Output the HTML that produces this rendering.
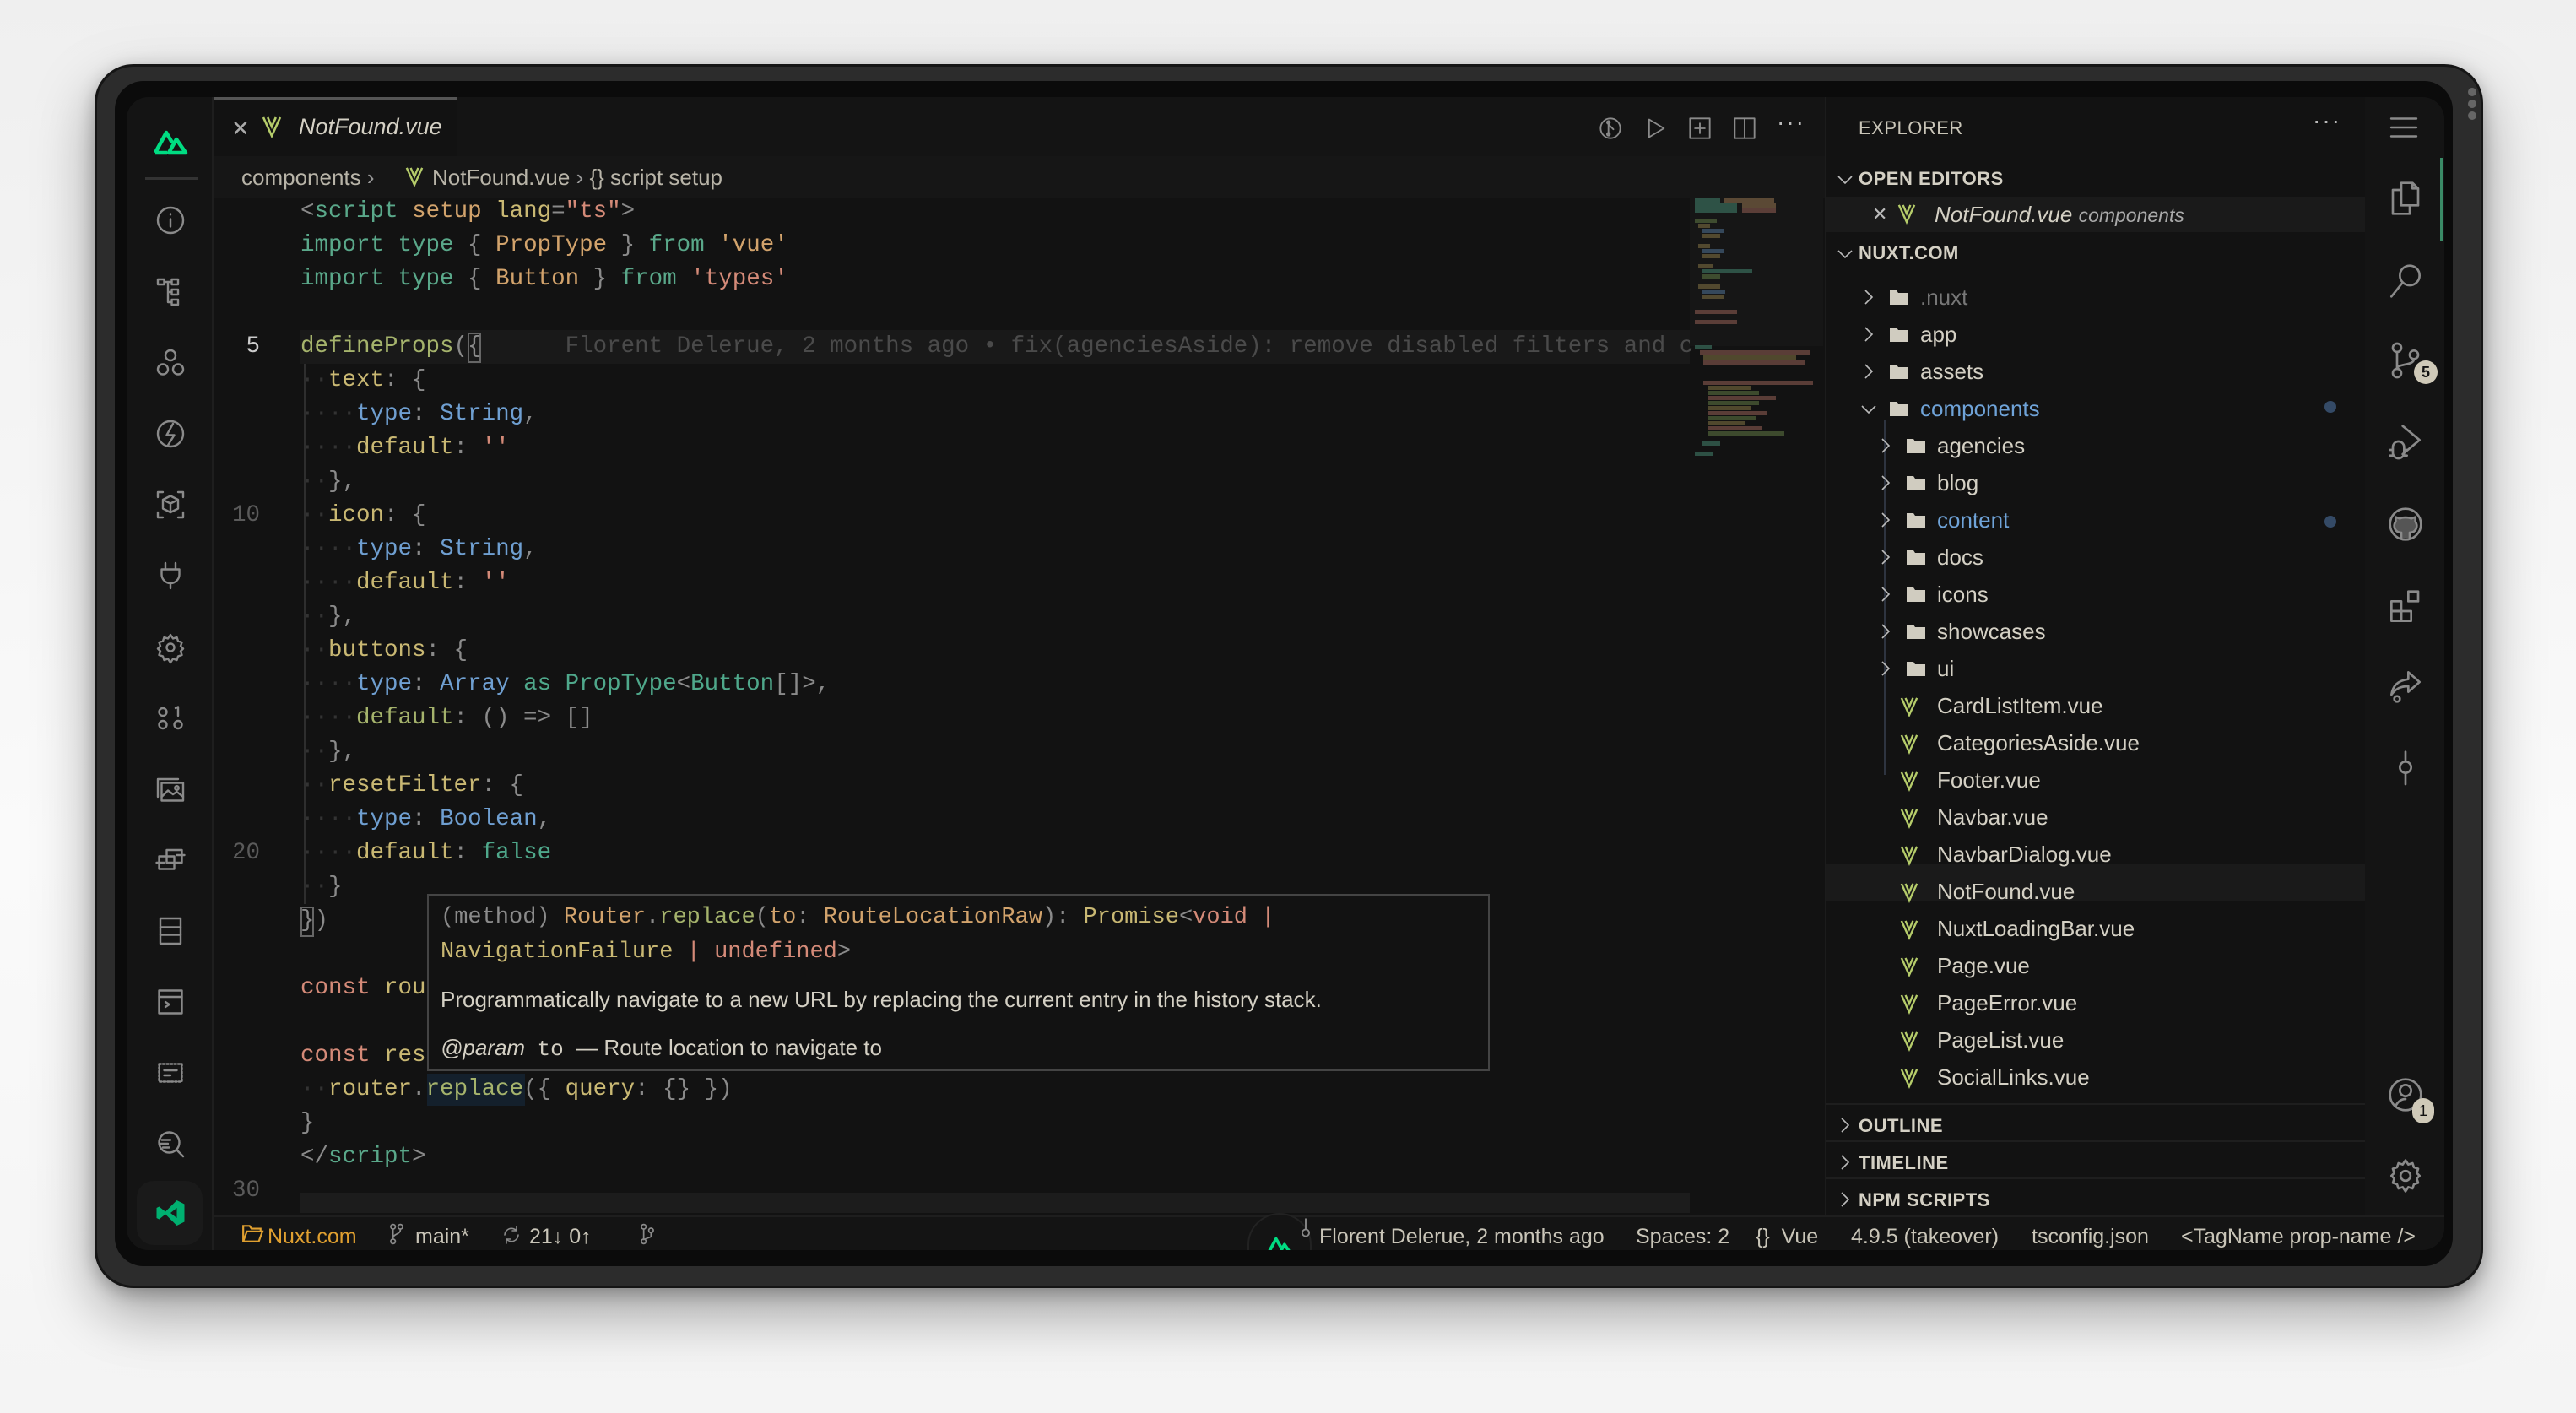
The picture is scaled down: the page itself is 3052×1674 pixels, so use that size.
<!DOCTYPE html>
<html><head><meta charset="utf-8"><style>
*{margin:0;padding:0;box-sizing:border-box}
html,body{width:3052px;height:1674px;overflow:hidden;background:linear-gradient(#efefef,#fafafa 60%,#f4f4f4);font-family:"Liberation Sans",sans-serif}
.abs{position:absolute}
#frame{left:112px;top:76px;width:2830px;height:1450px;border-radius:46px;background:#2c2c2c;border:3px solid #151515;box-shadow:0 30px 70px rgba(0,0,0,.35),0 6px 20px rgba(0,0,0,.25)}
#bezel{left:136px;top:96px;width:2770px;height:1404px;border-radius:34px;background:#0b0b0b}
#screen{left:150px;top:115px;width:2746px;height:1366px;border-radius:26px;background:#121212;overflow:hidden}
.mono{font-family:"Liberation Mono",monospace;font-size:27.5px;line-height:40px}
.mono>div{white-space:pre}
.cl{position:absolute;left:206px}
.k{color:#5aa88a}.y{color:#d2a36c}.s{color:#d48a78}.p{color:#8a8a8a}.f{color:#c9b873}.b{color:#6f9fd1}.o{color:#a5b36c}.d{color:#333}.c{color:#d48a78}.g{color:#4fa88b}
.ln{position:absolute;left:110px;width:48px;text-align:right;color:#5a5a5a}
.ex{position:absolute;font-size:26px;color:#d4d0c4;white-space:nowrap;line-height:44px}
.hd{position:absolute;font-size:22px;font-weight:bold;color:#d4d0c4;letter-spacing:.5px}
.st{position:absolute;top:1330px;font-size:25px;color:#c9c5b8;white-space:nowrap;line-height:40px}
svg{position:absolute;overflow:visible}
.ic{fill:none;stroke:#8a8a8a;stroke-width:1.6;stroke-linecap:round;stroke-linejoin:round}
.chev{fill:none;stroke:#bbb;stroke-width:1.6}
</style></head><body>
<div id="frame" class="abs"></div>
<div id="bezel" class="abs"></div>
<div class="abs" style="left:2924px;top:104px;width:10px;height:10px;border-radius:5px;background:#666"></div>
<div class="abs" style="left:2924px;top:118px;width:10px;height:10px;border-radius:5px;background:#666"></div>
<div class="abs" style="left:2924px;top:132px;width:10px;height:10px;border-radius:5px;background:#666"></div>
<div id="screen" class="abs">
 <!-- tab bar -->
 <div class="abs" style="left:103px;top:0;width:2059px;height:70px;background:#141414"></div>
 <div class="abs" style="left:103px;top:0;width:288px;height:70px;background:#121212;border-top:3px solid #555"></div>
 <div class="abs" style="left:124px;top:22px;font-size:26px;color:#aaa">✕</div>
 <svg style="left:160px;top:22px" width="24" height="26" viewBox="0 0 12 13"><path d="M1 1L6 12 11 1M3.6 1L6 6.5 8.4 1" fill="none" stroke="#b5cc6a" stroke-width="1.3"/></svg>
 <div class="abs" style="left:204px;top:20px;font-size:27px;font-style:italic;color:#d4d0c4">NotFound.vue</div>
 <svg style="left:1744px;top:23px" width="28" height="28" viewBox="0 0 24 24" class="ic" stroke="#bbb"><circle cx="12" cy="12" r="10"/><path d="M10 6v12M10 8l5 5"/><circle cx="10" cy="6" r="1.5"/><circle cx="10" cy="18" r="1.5"/></svg>
 <svg style="left:1798px;top:23px" width="28" height="28" viewBox="0 0 24 24" class="ic" stroke="#bbb"><path d="M5 3l15 9-15 9z"/></svg>
 <svg style="left:1850px;top:23px" width="28" height="28" viewBox="0 0 24 24" class="ic" stroke="#bbb"><rect x="2" y="2" width="20" height="20"/><path d="M12 7v10M7 12h10"/></svg>
 <svg style="left:1903px;top:23px" width="28" height="28" viewBox="0 0 24 24" class="ic" stroke="#bbb"><rect x="2" y="2" width="20" height="20"/><path d="M12 2v20"/></svg>
 <div class="abs" style="left:1955px;top:14px;font-size:28px;color:#bbb;letter-spacing:2px">···</div>

 <!-- breadcrumb -->
 <div class="abs" style="left:103px;top:70px;width:2059px;height:50px;background:#161616"></div>
 <div class="abs" style="left:136px;top:80px;font-size:26px;color:#b8b4a8;white-space:nowrap">components <span style="color:#999">›</span></div>
 <svg style="left:330px;top:82px" width="22" height="24" viewBox="0 0 12 13"><path d="M1 1L6 12 11 1M3.6 1L6 6.5 8.4 1" fill="none" stroke="#b5cc6a" stroke-width="1.3"/></svg>
 <div class="abs" style="left:362px;top:80px;font-size:26px;color:#b8b4a8;white-space:nowrap">NotFound.vue <span style="color:#999">›</span> {} script setup</div>

 <!-- current line -->
 <div class="abs" style="left:206px;top:276px;width:1646px;height:40px;background:#191919"></div>
 <div class="abs" style="left:210px;top:316px;width:2px;height:640px;background:#2e2e2e"></div>
 <div class="abs" style="left:404px;top:279px;width:16px;height:36px;border:2px solid #666"></div>
 <div class="abs" style="left:206px;top:959px;width:16px;height:36px;border:2px solid #666"></div>
 <div class="abs" style="left:356px;top:1157px;width:116px;height:38px;background:#14202c"></div>

 <div class="mono">
 <div class="ln" style="top:276px;color:#ccc">5</div>
 <div class="ln" style="top:476px">10</div>
 <div class="ln" style="top:876px">20</div>
 <div class="ln" style="top:1276px">30</div>
 <div class="cl" style="top:116px"><span class="p">&lt;</span><span class="k">script</span> <span class="y">setup</span> <span class="f">lang</span><span class="p">=</span><span class="s">"ts"</span><span class="p">&gt;</span></div>
 <div class="cl" style="top:156px"><span class="k">import type</span> <span class="p">{</span> <span class="y">PropType</span> <span class="p">}</span> <span class="k">from</span> <span class="y">'vue'</span></div>
 <div class="cl" style="top:196px"><span class="k">import type</span> <span class="p">{</span> <span class="y">Button</span> <span class="p">}</span> <span class="k">from</span> <span class="s">'types'</span></div>
 <div class="cl" style="top:276px"><span class="o">defineProps</span><span class="p">({</span>      <span style="color:#4a4a4a">Florent Delerue, 2 months ago • fix(agenciesAside): remove disabled filters and c</span></div>
 <div class="cl" style="top:316px"><span class="d">··</span><span class="f">text</span><span class="p">: {</span></div>
 <div class="cl" style="top:356px"><span class="d">····</span><span class="b">type</span><span class="p">:</span> <span class="b">String</span><span class="p">,</span></div>
 <div class="cl" style="top:396px"><span class="d">····</span><span class="f">default</span><span class="p">:</span> <span class="s">''</span></div>
 <div class="cl" style="top:436px"><span class="d">··</span><span class="p">},</span></div>
 <div class="cl" style="top:476px"><span class="d">··</span><span class="f">icon</span><span class="p">: {</span></div>
 <div class="cl" style="top:516px"><span class="d">····</span><span class="b">type</span><span class="p">:</span> <span class="b">String</span><span class="p">,</span></div>
 <div class="cl" style="top:556px"><span class="d">····</span><span class="f">default</span><span class="p">:</span> <span class="s">''</span></div>
 <div class="cl" style="top:596px"><span class="d">··</span><span class="p">},</span></div>
 <div class="cl" style="top:636px"><span class="d">··</span><span class="f">buttons</span><span class="p">: {</span></div>
 <div class="cl" style="top:676px"><span class="d">····</span><span class="b">type</span><span class="p">:</span> <span class="b">Array</span> <span class="g">as</span> <span class="g">PropType</span><span class="p">&lt;</span><span class="g">Button</span><span class="p">[]&gt;,</span></div>
 <div class="cl" style="top:716px"><span class="d">····</span><span class="o">default</span><span class="p">: () =&gt; []</span></div>
 <div class="cl" style="top:756px"><span class="d">··</span><span class="p">},</span></div>
 <div class="cl" style="top:796px"><span class="d">··</span><span class="f">resetFilter</span><span class="p">: {</span></div>
 <div class="cl" style="top:836px"><span class="d">····</span><span class="b">type</span><span class="p">:</span> <span class="b">Boolean</span><span class="p">,</span></div>
 <div class="cl" style="top:876px"><span class="d">····</span><span class="f">default</span><span class="p">:</span> <span class="g">false</span></div>
 <div class="cl" style="top:916px"><span class="d">··</span><span class="p">}</span></div>
 <div class="cl" style="top:956px"><span class="p">})</span></div>
 <div class="cl" style="top:1036px"><span class="c">const</span> <span class="f">rou</span></div>
 <div class="cl" style="top:1116px"><span class="c">const</span> <span class="f">res</span></div>
 <div class="cl" style="top:1156px"><span class="d">··</span><span class="f">router</span><span class="p">.</span><span class="o">replace</span><span class="p">({</span> <span class="f">query</span><span class="p">: {} })</span></div>
 <div class="cl" style="top:1196px"><span class="p">}</span></div>
 <div class="cl" style="top:1236px"><span class="p">&lt;/</span><span class="k">script</span><span class="p">&gt;</span></div>
 </div>

 <!-- minimap -->
 <div class="abs" style="left:1852px;top:115px;width:158px;height:180px;background:#161616"></div>
 <div class="abs" style="left:1858px;top:120px;width:140px;height:450px;opacity:.6;background:
  linear-gradient(#3f7a66,#3f7a66) 0 0/30px 5px no-repeat,
  linear-gradient(#8a6c4a,#8a6c4a) 34px 0/60px 5px no-repeat,
  linear-gradient(#3f7a66,#3f7a66) 0 6px/50px 5px no-repeat,
  linear-gradient(#8a6c4a,#8a6c4a) 56px 6px/40px 5px no-repeat,
  linear-gradient(#3f7a66,#3f7a66) 0 12px/50px 5px no-repeat,
  linear-gradient(#8a5a50,#8a5a50) 56px 12px/40px 5px no-repeat,
  linear-gradient(#5a7040,#5a7040) 0 24px/26px 5px no-repeat,
  linear-gradient(#7a6c40,#7a6c40) 4px 30px/14px 5px no-repeat,
  linear-gradient(#4a6a8a,#4a6a8a) 8px 36px/26px 5px no-repeat,
  linear-gradient(#7a6c40,#7a6c40) 8px 42px/22px 5px no-repeat,
  linear-gradient(#7a6c40,#7a6c40) 4px 54px/14px 5px no-repeat,
  linear-gradient(#4a6a8a,#4a6a8a) 8px 60px/26px 5px no-repeat,
  linear-gradient(#7a6c40,#7a6c40) 8px 66px/22px 5px no-repeat,
  linear-gradient(#7a6c40,#7a6c40) 4px 78px/18px 5px no-repeat,
  linear-gradient(#3f7a66,#3f7a66) 8px 84px/60px 5px no-repeat,
  linear-gradient(#5a7040,#5a7040) 8px 90px/22px 5px no-repeat,
  linear-gradient(#7a6c40,#7a6c40) 4px 102px/26px 5px no-repeat,
  linear-gradient(#4a6a8a,#4a6a8a) 8px 108px/28px 5px no-repeat,
  linear-gradient(#7a6c40,#7a6c40) 8px 114px/26px 5px no-repeat,
  linear-gradient(#8a5a50,#8a5a50) 0 132px/50px 5px no-repeat,
  linear-gradient(#8a5a50,#8a5a50) 0 144px/50px 5px no-repeat,
  linear-gradient(#3f7a66,#3f7a66) 0 174px/20px 5px no-repeat,
  linear-gradient(#8a5a50,#8a5a50) 6px 180px/130px 5px no-repeat,
  linear-gradient(#7a6c40,#7a6c40) 10px 186px/110px 5px no-repeat,
  linear-gradient(#8a5a50,#8a5a50) 10px 192px/120px 5px no-repeat,
  linear-gradient(#8a5a50,#8a5a50) 10px 216px/140px 5px no-repeat,
  linear-gradient(#7a6c40,#7a6c40) 16px 222px/50px 5px no-repeat,
  linear-gradient(#5a7040,#5a7040) 16px 228px/60px 5px no-repeat,
  linear-gradient(#8a5a50,#8a5a50) 16px 234px/80px 5px no-repeat,
  linear-gradient(#5a7040,#5a7040) 16px 240px/60px 5px no-repeat,
  linear-gradient(#7a6c40,#7a6c40) 16px 246px/50px 5px no-repeat,
  linear-gradient(#8a5a50,#8a5a50) 16px 252px/70px 5px no-repeat,
  linear-gradient(#5a7040,#5a7040) 16px 258px/56px 5px no-repeat,
  linear-gradient(#7a6c40,#7a6c40) 16px 264px/44px 5px no-repeat,
  linear-gradient(#8a5a50,#8a5a50) 16px 270px/64px 5px no-repeat,
  linear-gradient(#5a7040,#5a7040) 16px 276px/90px 5px no-repeat,
  linear-gradient(#3f7a66,#3f7a66) 8px 288px/22px 5px no-repeat,
  linear-gradient(#3f7a66,#3f7a66) 0 300px/22px 5px no-repeat"></div>

 <!-- hscroll -->
 <div class="abs" style="left:206px;top:1298px;width:1646px;height:24px;background:#1c1c1c"></div>

 <!-- tooltip -->
 <div class="abs" style="left:356px;top:944px;width:1259px;height:210px;background:#121212;border:2px solid #444"></div>
 <div class="mono" style="position:absolute;left:372px;top:952px;font-size:27px;line-height:41px">
  <div><span class="p">(method)</span> <span class="y">Router</span><span class="p">.</span><span class="o">replace</span><span class="p">(</span><span class="y">to</span><span class="p">:</span> <span class="y">RouteLocationRaw</span><span class="p">):</span> <span class="f">Promise</span><span class="p">&lt;</span><span class="s">void</span> <span class="s">|</span></div>
  <div><span class="f">NavigationFailure</span> <span class="s">|</span> <span class="s">undefined</span><span class="p">&gt;</span></div>
 </div>
 <div class="abs" style="left:372px;top:1054px;font-size:26px;color:#d4d0c4;white-space:nowrap">Programmatically navigate to a new URL by replacing the current entry in the history stack.</div>
 <div class="abs" style="left:372px;top:1111px;font-size:26px;color:#d4d0c4;white-space:nowrap"><i>@param</i>&nbsp; <span style="font-family:'Liberation Mono',monospace">to</span>&nbsp; — Route location to navigate to</div>

 <!-- sidebar -->
 <div class="abs" style="left:2012px;top:0;width:2px;height:1325px;background:#1c1c1c"></div>
 <div class="abs" style="left:2014px;top:0;width:638px;height:1325px;background:#121212"></div>
 <div class="abs" style="left:2052px;top:24px;font-size:22px;color:#c9c5b8;letter-spacing:.5px">EXPLORER</div>
 <div class="abs" style="left:2590px;top:12px;font-size:28px;color:#bbb;letter-spacing:2px">···</div>
 <div class="abs" style="left:2014px;top:118px;width:638px;height:42px;background:#1a1a1a"></div>
 <div class="abs" style="left:2014px;top:908px;width:638px;height:44px;background:#1a1a1a"></div>
 <div class="abs" style="left:2014px;top:1192px;width:638px;height:2px;background:#1e1e1e"></div>
 <div class="abs" style="left:2014px;top:1236px;width:638px;height:2px;background:#1e1e1e"></div>
 <div class="abs" style="left:2014px;top:1280px;width:638px;height:2px;background:#1e1e1e"></div>
 <div class="abs" style="left:2082px;top:383px;width:2px;height:420px;background:#2e3440"></div>
 <div class="hd" style="left:2052px;top:84px">OPEN EDITORS</div>
 <div class="hd" style="left:2052px;top:172px">NUXT.COM</div>
 <div class="hd" style="left:2052px;top:1206px">OUTLINE</div>
 <div class="hd" style="left:2052px;top:1250px">TIMELINE</div>
 <div class="hd" style="left:2052px;top:1294px">NPM SCRIPTS</div>
 <svg style="left:2026px;top:92px" width="20" height="12" viewBox="0 0 20 12" class="chev"><path d="M2 2l8 8 8-8"/></svg>
 <svg style="left:2026px;top:180px" width="20" height="12" viewBox="0 0 20 12" class="chev"><path d="M2 2l8 8 8-8"/></svg>
 <svg style="left:2030px;top:1208px" width="12" height="20" viewBox="0 0 12 20" class="chev"><path d="M2 2l8 8-8 8"/></svg>
 <svg style="left:2030px;top:1252px" width="12" height="20" viewBox="0 0 12 20" class="chev"><path d="M2 2l8 8-8 8"/></svg>
 <svg style="left:2030px;top:1296px" width="12" height="20" viewBox="0 0 12 20" class="chev"><path d="M2 2l8 8-8 8"/></svg>
 <div class="ex" style="left:2068px;top:117px;font-size:22px;color:#bbb">✕</div>
 <svg style="left:2098px;top:126px" width="22" height="24" viewBox="0 0 12 13"><path d="M1 1L6 12 11 1M3.6 1L6 6.5 8.4 1" fill="none" stroke="#b5cc6a" stroke-width="1.3"/></svg>
 <div class="ex" style="left:2142px;top:117px;font-style:italic">NotFound.vue <span style="font-size:23px;color:#aaa">components</span></div>

 <div id="tree"></div>
 <div class="abs" style="left:2604px;top:360px;width:14px;height:14px;border-radius:7px;background:#344a66"></div>
 <div class="abs" style="left:2604px;top:496px;width:14px;height:14px;border-radius:7px;background:#344a66"></div>

 <!-- right activity bar -->
 <div class="abs" style="left:2652px;top:0;width:94px;height:1325px;background:#141414"></div>
 <div class="abs" style="left:2741px;top:72px;width:4px;height:98px;background:#3a8a66"></div>
 <svg style="left:2680px;top:22px" width="36" height="28" viewBox="0 0 24 18" class="ic" stroke="#999"><path d="M2 2h20M2 9h20M2 16h20"/></svg>
 <svg style="left:2680px;top:98px" width="40" height="44" viewBox="0 0 24 26" class="ic" stroke="#ddd"><path d="M9 2h8l4 4v12H9zM17 2v4h4M9 7H3v17h12v-6"/></svg>
 <svg style="left:2680px;top:196px" width="40" height="44" viewBox="0 0 24 26" class="ic" stroke="#888"><circle cx="15" cy="9" r="7"/><path d="M10 14L2 24"/></svg>
 <svg style="left:2680px;top:290px" width="40" height="44" viewBox="0 0 24 26" class="ic" stroke="#888"><circle cx="6" cy="4" r="3"/><circle cx="6" cy="22" r="3"/><circle cx="18" cy="9" r="3"/><path d="M6 7v12M18 12c0 5-12 3-12 7"/></svg>
 <div class="abs" style="left:2710px;top:312px;width:28px;height:28px;border-radius:14px;background:#cfc9b8;color:#111;font-size:18px;font-weight:bold;text-align:center;line-height:28px">5</div>
 <svg style="left:2680px;top:386px" width="40" height="44" viewBox="0 0 24 26" class="ic" stroke="#888"><path d="M10 2l12 10-12 10M3 17a4 4 0 0 1 8 0v4a4 4 0 0 1-8 0zM1 19h2M11 19h2M1 23h2M11 23h2"/></svg>
 <svg style="left:2680px;top:484px" width="40" height="44" viewBox="0 0 24 26" class="ic" stroke="#888"><circle cx="12" cy="13" r="11"/><path d="M9 23v-4c-3 0-5-2-5-5 0-1 1-3 1-3V8l3 1c2-1 6-1 8 0l3-1v3s1 2 1 3c0 3-2 5-5 5v4" fill="#555"/></svg>
 <svg style="left:2680px;top:582px" width="40" height="44" viewBox="0 0 24 26" class="ic" stroke="#888"><rect x="2" y="9" width="7" height="7"/><rect x="2" y="16" width="7" height="7"/><rect x="9" y="16" width="7" height="7"/><rect x="14" y="2" width="7" height="7"/></svg>
 <svg style="left:2680px;top:676px" width="40" height="44" viewBox="0 0 24 26" class="ic" stroke="#888"><path d="M14 3l8 7-8 7v-4c-6 0-9 2-12 6 1-6 4-10 12-11z"/><circle cx="6" cy="22" r="2"/></svg>
 <svg style="left:2680px;top:772px" width="40" height="44" viewBox="0 0 24 26" class="ic" stroke="#888"><circle cx="12" cy="13" r="4"/><path d="M12 2v7M12 17v8"/></svg>
 <svg style="left:2680px;top:1160px" width="40" height="44" viewBox="0 0 24 26" class="ic" stroke="#777"><circle cx="12" cy="13" r="11"/><circle cx="12" cy="10" r="4"/><path d="M5 21c2-4 5-5 7-5"/></svg>
 <div class="abs" style="left:2708px;top:1186px;width:26px;height:30px;border-radius:13px;background:#cfc9b8;color:#111;font-size:18px;text-align:center;line-height:30px">1</div>
 <svg style="left:2680px;top:1256px" width="40" height="44" viewBox="0 0 24 26" class="ic" stroke="#777"><circle cx="12" cy="13" r="3.5"/><path d="M12 2l2 3 3-1 1 3 3 1-1 3 2 2-2 2 1 3-3 1-1 3-3-1-2 3-2-3-3 1-1-3-3-1 1-3-2-2 2-2-1-3 3-1 1-3 3 1z"/></svg>

 <!-- status bar -->
 <div class="abs" style="left:103px;top:1325px;width:2643px;height:41px;background:#141414;border-top:2px solid #1e1e1e"></div>
 <svg style="left:136px;top:1334px" width="26" height="24" viewBox="0 0 24 22" fill="none" stroke="#e0a030" stroke-width="2"><path d="M2 20V3h7l2 3h10v3M2 20l4-11h17l-4 11z"/></svg>
 <div class="st" style="left:167px;color:#e0a030">Nuxt.com</div>
 <svg style="left:310px;top:1334px" width="20" height="26" viewBox="0 0 16 24" class="ic" stroke="#bbb"><circle cx="4" cy="4" r="2.5"/><circle cx="12" cy="4" r="2.5"/><circle cx="4" cy="20" r="2.5"/><path d="M4 7v10M12 7c0 6-8 4-8 10"/></svg>
 <div class="st" style="left:342px">main*</div>
 <svg style="left:444px;top:1336px" width="24" height="24" viewBox="0 0 24 24" class="ic" stroke="#bbb"><path d="M20 12a8 8 0 0 1-14 5M4 12a8 8 0 0 1 14-5M18 2v5h-5M6 22v-5h5"/></svg>
 <div class="st" style="left:477px">21↓ 0↑</div>
 <svg style="left:606px;top:1334px" width="22" height="26" viewBox="0 0 16 24" class="ic" stroke="#bbb"><circle cx="4" cy="4" r="2.5"/><circle cx="12" cy="8" r="2.5"/><circle cx="4" cy="20" r="2.5"/><path d="M4 7v10M12 11v4l-8 3"/></svg>
 <div class="abs" style="left:1328px;top:1322px;width:76px;height:80px;border-radius:38px;background:#141414;border:2px solid #222"></div>
 <svg style="left:1346px;top:1346px" width="40" height="30" viewBox="0 0 40 36"><path d="M2 32 L15 8 L22 20 M18 32 L27 16 L38 32 Z M2 32 H16" fill="none" stroke="#00dc82" stroke-width="4.5" stroke-linejoin="round"/></svg>
 <svg style="left:1390px;top:1328px" width="14" height="28" viewBox="0 0 10 24" class="ic" stroke="#bbb"><circle cx="5" cy="15" r="3.5"/><path d="M5 1v10"/></svg>
 <div class="st" style="left:1413px">Florent Delerue, 2 months ago</div>
 <div class="st" style="left:1788px">Spaces: 2</div>
 <div class="st" style="left:1930px">{}&nbsp; Vue</div>
 <div class="st" style="left:2043px">4.9.5 (takeover)</div>
 <div class="st" style="left:2257px">tsconfig.json</div>
 <div class="st" style="left:2434px">&lt;TagName prop-name /&gt;</div>

 <!-- left activity bar -->
 <div class="abs" style="left:0;top:0;width:103px;height:1366px;background:#141414;border-right:2px solid #1e1e1e"></div>
 <svg style="left:32px;top:34px" width="40" height="36" viewBox="0 0 40 36"><path d="M2 32 L15 8 L22 20 M18 32 L27 16 L38 32 Z M2 32 H16" fill="none" stroke="#00dc82" stroke-width="4.5" stroke-linejoin="round"/></svg>
 <div class="abs" style="left:22px;top:95px;width:62px;height:3px;background:#333"></div>
 <svg style="left:34px;top:128px" width="36" height="36" viewBox="0 0 24 24" class="ic"><circle cx="12" cy="12" r="10"/><path d="M12 11v6M12 7v.5"/></svg>
 <svg style="left:34px;top:213px" width="36" height="36" viewBox="0 0 24 24" class="ic"><rect x="2" y="2" width="5" height="4"/><rect x="13" y="2" width="5" height="4"/><rect x="13" y="10" width="5" height="4"/><rect x="13" y="18" width="5" height="4"/><path d="M7 4h6M10 4v16h3M10 12h3"/></svg>
 <svg style="left:34px;top:297px" width="36" height="36" viewBox="0 0 24 24" class="ic"><circle cx="12" cy="6" r="4"/><circle cx="6" cy="17" r="4"/><circle cx="18" cy="17" r="4"/></svg>
 <svg style="left:34px;top:381px" width="36" height="36" viewBox="0 0 24 24" class="ic"><circle cx="12" cy="12" r="10"/><path d="M14 4l-5 9h6l-5 8"/></svg>
 <svg style="left:34px;top:465px" width="36" height="36" viewBox="0 0 24 24" class="ic"><path d="M2 6V2h4M18 2h4v4M22 18v4h-4M6 22H2v-4M12 5l6 3v7l-6 3-6-3V8zM6 8l6 3 6-3M12 11v7"/></svg>
 <svg style="left:34px;top:549px" width="36" height="36" viewBox="0 0 24 24" class="ic"><path d="M8 2v5M16 2v5M5 7h14v4a7 7 0 0 1-14 0zM12 18v4"/></svg>
 <svg style="left:34px;top:634px" width="36" height="36" viewBox="0 0 24 24" class="ic"><circle cx="12" cy="12" r="3"/><path d="M12 2l2 3 3-1 1 3 3 1-1 3 2 2-2 2 1 3-3 1-1 3-3-1-2 3-2-3-3 1-1-3-3-1 1-3-2-2 2-2-1-3 3-1 1-3 3 1z"/></svg>
 <svg style="left:34px;top:718px" width="36" height="36" viewBox="0 0 24 24" class="ic"><circle cx="6" cy="7" r="3"/><circle cx="6" cy="17" r="3"/><circle cx="18" cy="17" r="3"/><path d="M16 4l2-1v7"/></svg>
 <svg style="left:34px;top:802px" width="36" height="36" viewBox="0 0 24 24" class="ic"><path d="M2 18V4h16"/><rect x="5" y="7" width="17" height="14"/><path d="M5 18l5-5 4 3 3-2 5 4"/><circle cx="17" cy="11" r="1.5"/></svg>
 <svg style="left:34px;top:886px" width="36" height="36" viewBox="0 0 24 24" class="ic"><rect x="3" y="9" width="12" height="10"/><rect x="9" y="4" width="12" height="10"/><path d="M1 14h6M17 8h6"/></svg>
 <svg style="left:34px;top:970px" width="36" height="36" viewBox="0 0 24 24" class="ic"><rect x="4" y="2" width="16" height="20"/><path d="M4 9h16M4 15h16"/></svg>
 <svg style="left:34px;top:1054px" width="36" height="36" viewBox="0 0 24 24" class="ic"><rect x="3" y="3" width="18" height="18"/><path d="M3 8h18M8 12l3 2-3 2"/></svg>
 <svg style="left:34px;top:1138px" width="36" height="36" viewBox="0 0 24 24" class="ic" stroke-dasharray="1.5 1.5"><rect x="3" y="5" width="18" height="14"/><path d="M7 10h10M7 14h5" stroke-dasharray="none"/></svg>
 <svg style="left:34px;top:1222px" width="36" height="36" viewBox="0 0 24 24" class="ic"><circle cx="11" cy="11" r="8"/><path d="M17 17l5 5M5 9h7M4 12h6M6 15h5"/></svg>
 <div class="abs" style="left:12px;top:1284px;width:78px;height:76px;border-radius:20px;background:#1a1a1a"></div>
 <svg style="left:34px;top:1304px" width="36" height="36" viewBox="0 0 24 24"><path d="M17 2L8 11 3 7 1 8v8l2 1 5-4 9 9 6-3V5zM17 8v8l-5-4z" fill="#00b070"/></svg>
</div>
<script>
var rows=[["f",0,".nuxt","#777"],["f",0,"app"],["f",0,"assets"],["o",0,"components","#6fa3d8"],["f",1,"agencies"],["f",1,"blog"],["f",1,"content","#6fa3d8"],["f",1,"docs"],["f",1,"icons"],["f",1,"showcases"],["f",1,"ui"],["v",1,"CardListItem.vue"],["v",1,"CategoriesAside.vue"],["v",1,"Footer.vue"],["v",1,"Navbar.vue"],["v",1,"NavbarDialog.vue"],["v",1,"NotFound.vue"],["v",1,"NuxtLoadingBar.vue"],["v",1,"Page.vue"],["v",1,"PageError.vue"],["v",1,"PageList.vue"],["v",1,"SocialLinks.vue"]];
var h="";rows.forEach(function(r,i){var c=237+i*44-22;var off=r[1]*20;
if(r[0]=="o"){h+='<svg style="left:'+(2054+off)+'px;top:'+(c+17)+'px" width="20" height="12" viewBox="0 0 20 12" class="chev"><path d="M2 2l8 8 8-8"/></svg>';}
else if(r[0]=="f"){h+='<svg style="left:'+(2058+off)+'px;top:'+(c+12)+'px" width="12" height="20" viewBox="0 0 12 20" class="chev"><path d="M2 2l8 8-8 8"/></svg>';}
if(r[0]!="v"){h+='<svg style="left:'+(2088+off)+'px;top:'+(c+12)+'px" width="24" height="20" viewBox="0 0 24 20"><path d="M1 2h8l2 3h12v14H1z" fill="#d0ccc0"/></svg>';}
else{h+='<svg style="left:2101px;top:'+(c+11)+'px" width="22" height="24" viewBox="0 0 12 13"><path d="M1 1L6 12 11 1M3.6 1L6 6.5 8.4 1" fill="none" stroke="#b5cc6a" stroke-width="1.3"/></svg>';}
h+='<div class="ex" style="left:'+(2125+off)+'px;top:'+c+'px;color:'+(r[3]||"#d4d0c4")+'">'+r[2]+'</div>';});
document.getElementById("tree").innerHTML=h;
</script>
</body></html>
